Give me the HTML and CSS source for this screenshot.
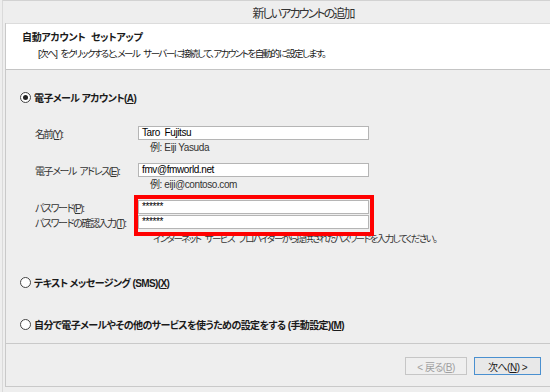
FILE: index.html
```html
<!DOCTYPE html>
<html lang="ja">
<head>
    <meta charset="UTF-8">
    <title>新しいアカウントの追加</title>
    <link rel="stylesheet" href="styles.css">
</head>
<body>
    <div class="window">
        <!-- Title bar -->
        <div class="titlebar">新しいアカウントの追加</div>

        <div class="frame">
            <!-- White header -->
            <div class="header">
                <div class="header-title">自動アカウント セットアップ</div>
                <div class="header-desc">[次へ] をクリックすると、メール サーバーに接続して、アカウントを自動的に設定します。</div>
            </div>

            <div class="main">
                <div class="option option-first">
                    <span class="radio checked"></span>
                    <span>電子メール アカウント(<u>A</u>)</span>
                </div>

                <div class="fields">
                    <div class="row row-name">
                        <span class="label">名前(<u>Y</u>):</span>
                        <span class="input">Taro&nbsp;&nbsp;Fujitsu</span>
                    </div>
                    <div class="example">例: Eiji Yasuda</div>

                    <div class="row row-mail">
                        <span class="label">電子メール アドレス(<u>E</u>):</span>
                        <span class="input">fmv@fmworld.net</span>
                    </div>
                    <div class="example">例: eiji@contoso.com</div>

                    <div class="pw-group">
                        <div class="row">
                            <span class="label">パスワード(<u>P</u>):</span>
                            <span class="input">******</span>
                        </div>
                        <div class="row">
                            <span class="label">パスワードの確認入力(<u>T</u>):</span>
                            <span class="input">******</span>
                        </div>
                        <!-- Red highlight drawn over the password boxes -->
                        <div class="highlight"></div>
                    </div>
                    <div class="pw-note">インターネット サービス プロバイダーから提供されたパスワードを入力してください。</div>
                </div>

                <div class="option option-sms">
                    <span class="radio"></span>
                    <span>テキスト メッセージング (SMS)(<u>X</u>)</span>
                </div>

                <div class="option option-manual">
                    <span class="radio"></span>
                    <span>自分で電子メールやその他のサービスを使うための設定をする (手動設定)(<u>M</u>)</span>
                </div>
            </div>

            <!-- Navigation buttons -->
            <div class="footer">
                <button class="btn" disabled>&lt; 戻る(<u>B</u>)</button>
                <button class="btn btn-next">次へ(<u>N</u>) &gt;</button>
            </div>
        </div>
    </div>
</body>
</html>
```

FILE: styles.css
```css
/* Page and window */
body {
    margin: 0;
    background-color: #eeeeee;
    font-family: "Liberation Sans", "Noto Sans CJK JP", sans-serif;
    font-size: 10px;
    letter-spacing: -1.4px;
    font-feature-settings: "palt";
    white-space: nowrap;
    color: #1a1a1a;
}

.window {
    width: 548px;
    height: 391px;
    margin-left: 2px;
    border-top: 1px solid #d2d2d2;
    border-left: 1px solid #dadada;
    overflow: hidden;
}

.titlebar {
    height: 22px;
    line-height: 26px;
    padding-left: 52px;
    text-align: center;
    font-size: 12px;
    letter-spacing: -1.9px;
    color: #333;
}

/* Frame with header, body and footer */
.frame {
    margin-left: 2px;
    border-left: 1px solid #c9c9c9;
    border-bottom: 1px solid #c9c9c9;
}

.header {
    height: 45px;
    background-color: #fff;
    border-top: 1px solid #dcdcdc;
    border-bottom: 1px solid #c4c4c4;
    padding-left: 16px;
}

.header-title {
    font-weight: bold;
    letter-spacing: -0.3px;
    word-spacing: 3px;
    line-height: 14px;
    margin-top: 7px;
}

.header-desc {
    font-size: 9.5px;
    letter-spacing: -1.55px;
    word-spacing: 3px;
    line-height: 14px;
    margin-top: 2px;
    padding-left: 16px;
}

.main {
    height: 273px;
    padding-left: 14px;
}

/* Radio options */
.option {
    display: flex;
    align-items: center;
    gap: 3px;
    height: 14px;
    font-weight: bold;
    letter-spacing: -0.6px;
}

.option-first {
    padding-top: 20px;
}

.option-sms {
    margin-top: 29px;
}

.option-manual {
    margin-top: 28px;
}

.radio {
    width: 9px;
    height: 9px;
    border: 1px solid #444;
    border-radius: 50%;
    background-color: #fff;
    display: flex;
    justify-content: center;
    align-items: center;
}

.radio.checked::after {
    content: "";
    width: 5px;
    height: 5px;
    border-radius: 50%;
    background-color: #222;
}

/* Text fields */
.fields {
    padding-left: 15px;
}

.row {
    display: flex;
    align-items: center;
    height: 14px;
}

.row-name {
    margin-top: 22px;
}

.row-mail {
    margin-top: 8px;
}

.label {
    width: 103px;
    word-spacing: 2px;
    color: #333;
}

.input {
    box-sizing: border-box;
    width: 231px;
    height: 14px;
    line-height: 12px;
    padding-left: 3px;
    background-color: #fff;
    border: 1px solid #b5b5b5;
    letter-spacing: -0.4px;
    color: #000;
}

.example {
    height: 14px;
    line-height: 14px;
    margin-top: 1px;
    padding-left: 115px;
    letter-spacing: -0.4px;
    color: #333;
}

.pw-group {
    position: relative;
    margin-top: 8px;
    display: flex;
    flex-direction: column;
    gap: 1px;
}

.highlight {
    position: absolute;
    left: 99px;
    top: -5px;
    width: 232px;
    height: 33px;
    border: 4px solid #ff0000;
}

.pw-note {
    height: 14px;
    line-height: 14px;
    margin-top: 3px;
    padding-left: 118px;
    font-size: 9.5px;
    letter-spacing: -1.55px;
    word-spacing: 3px;
    color: #333;
}

/* Footer buttons */
.footer {
    height: 42px;
    border-top: 1px solid #c9c9c9;
    display: flex;
    justify-content: flex-end;
    align-items: flex-start;
    gap: 7px;
    padding-right: 10px;
}

.btn {
    margin-top: 13px;
    height: 18px;
    width: 62px;
    padding: 0;
    font-family: inherit;
    font-size: 10px;
    letter-spacing: -0.5px;
    font-feature-settings: "palt";
    background-color: #efefef;
    border: 1px solid #c6c6c6;
    color: #a0a0a0;
}

.btn-next {
    width: 67px;
    color: #1a1a1a;
    background-color: #e8e8e8;
    border-color: #4a90d0;
}
```
